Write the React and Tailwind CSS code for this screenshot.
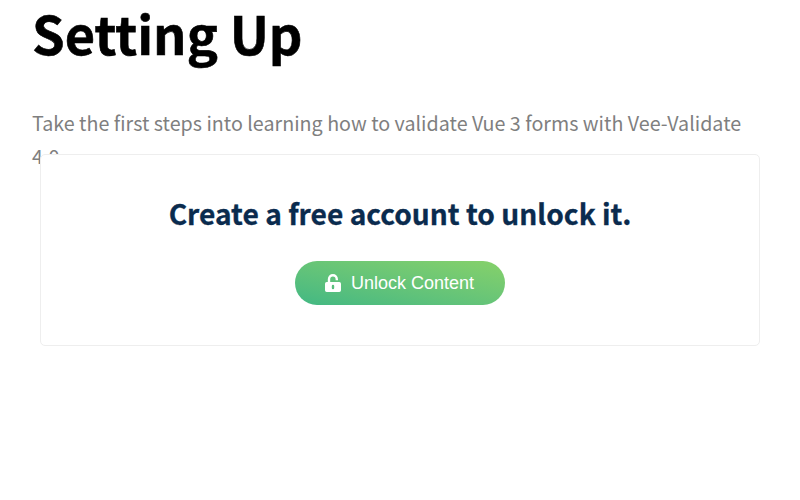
export default function App() {
  return (
    <main className="relative h-[500px] w-[800px] overflow-hidden bg-white px-8 font-['Noto_Sans_CJK_JP','Noto_Sans',sans-serif]">
      <h1 className="h-[106px] whitespace-nowrap text-[52.3px] leading-[64px] font-bold text-black [-webkit-text-stroke:0.6px_black]">Setting Up</h1>
      <p className="w-[736px] text-[19.7px] leading-[33px] text-[#7f7f7f]">
        Take the first steps into learning how to validate Vue 3 forms with Vee-Validate
        <br />4.0
      </p>
      <section className="absolute top-[154px] left-10 flex h-[192px] w-[720px] flex-col items-center rounded-[5px] border border-[#eeeeee] bg-white pt-[38px]">
        <h2 className="text-[28.15px] leading-[40px] font-bold whitespace-nowrap text-[#0a2b4e] [-webkit-text-stroke:0.3px_#0a2b4e]">Create a free account to unlock it.</h2>
        <button className="mt-7 flex h-11 w-[210px] items-center justify-center rounded-full bg-linear-to-tr from-[#41b883] to-[#86d169] pr-px font-['Liberation_Sans',sans-serif] text-[18px] text-white">
          <svg className="mr-[10px] h-[18px] w-4" viewBox="0 0 16 18" fill="none">
            <path d="M4 9V5.2a3.9 3.9 0 0 1 7.8 0v1" stroke="white" strokeWidth="2.4" />
            <path fillRule="evenodd" d="M1.7 8h12.6Q16 8 16 9.7v6.6q0 1.7-1.7 1.7H1.7Q0 18 0 16.3V9.7Q0 8 1.7 8ZM6.8 12v2a1.2 1.2 0 0 0 2.4 0v-2a1.2 1.2 0 0 0-2.4 0Z" fill="white" />
          </svg>
          Unlock Content
        </button>
      </section>
    </main>
  );
}
